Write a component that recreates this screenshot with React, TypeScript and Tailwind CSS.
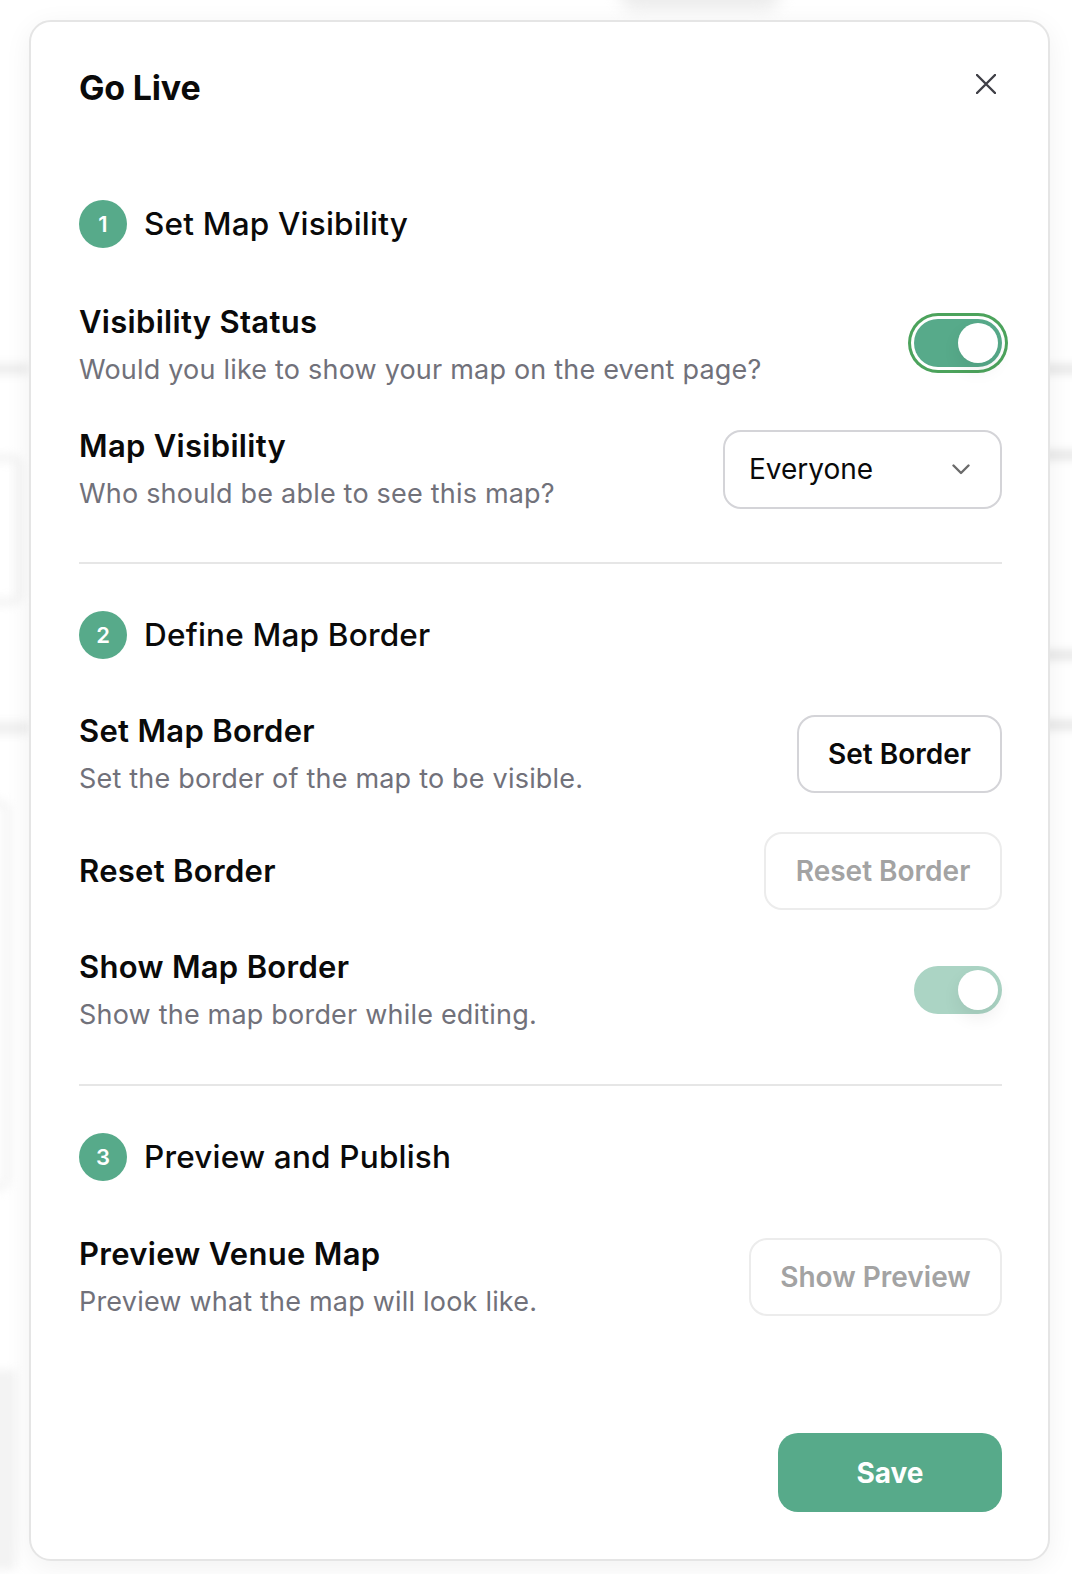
import React, { useState } from "react";

const GREEN = "bg-[#57aa8a]";

const StepHeader: React.FC<{ n: number; title: string; className?: string }> = ({ n, title, className }) => (
  <div className={`flex items-center gap-[17px] ${className || ""}`}>
    <div className={`flex h-[48px] w-[48px] items-center justify-center rounded-full ${GREEN} text-[22px] font-semibold text-white`}>
      {n}
    </div>
    <h3 className="text-[31.5px] font-medium leading-[40px] tracking-[0.2px] text-[#0a0a0a]">{title}</h3>
  </div>
);

const RowText: React.FC<{ label: string; desc?: string }> = ({ label, desc }) => (
  <div>
    <div className="text-[31px] font-semibold leading-[40px] tracking-[0.3px] text-[#0a0a0a]">{label}</div>
    {desc && <div className="mt-[10px] text-[27px] leading-[36px] tracking-[0.2px] text-[#71717a]">{desc}</div>}
  </div>
);

const Toggle: React.FC<{ on: boolean; disabled?: boolean; focused?: boolean; onChange?: (v: boolean) => void }> = ({
  on,
  disabled,
  focused,
  onChange,
}) => (
  <button
    type="button"
    onClick={() => !disabled && onChange && onChange(!on)}
    className={`relative flex h-[48px] w-[88px] items-center rounded-full p-[4px] ${
      disabled ? "bg-[#abd4c4]" : "bg-[#57aa8a]"
    } ${focused ? "ring-[3px] ring-[#4ca35c] ring-offset-[3px] ring-offset-white" : ""}`}
  >
    <span
      className={`block h-[40px] w-[40px] rounded-full bg-white shadow-[0_8px_18px_rgba(0,0,0,0.07)] ${
        on ? "ml-auto" : ""
      }`}
    />
  </button>
);

const OutlineBtn: React.FC<{ children: React.ReactNode; disabled?: boolean; className?: string }> = ({
  children,
  disabled,
  className,
}) => (
  <button
    type="button"
    disabled={disabled}
    className={`h-[78px] rounded-[18px] border-2 bg-white px-[28px] text-[28px] font-semibold ${
      disabled ? "border-[#ececec] text-[#a3a3a3]" : "border-[#d4d4d8] text-[#0a0a0a]"
    } ${className || ""}`}
  >
    {children}
  </button>
);

const Backdrop = () => (
  <div className="absolute inset-0 overflow-hidden">
    <div className="absolute left-[620px] top-[-20px] h-[30px] w-[160px] rounded-full bg-[#ececec] blur-[8px]" />
    <div className="absolute left-[-20px] top-[364px] h-[10px] w-[50px] bg-[#ececec] blur-[5px]" />
    <div className="absolute left-[-30px] top-[455px] h-[150px] w-[52px] rounded-[10px] border-[6px] border-[#f0f0f0] blur-[5px]" />
    <div className="absolute left-[-20px] top-[722px] h-[12px] w-[50px] bg-[#efefef] blur-[5px]" />
    <div className="absolute left-[-30px] top-[800px] h-[390px] w-[40px] rounded-[10px] border-[6px] border-[#f2f2f2] blur-[5px]" />
    <div className="absolute left-[-20px] top-[1370px] h-[200px] w-[36px] bg-[#f3f3f3] blur-[5px]" />
    <div className="absolute right-[-10px] top-[364px] h-[10px] w-[40px] bg-[#e8e8e8] blur-[4px]" />
    <div className="absolute right-[-10px] top-[450px] h-[10px] w-[40px] bg-[#e8e8e8] blur-[4px]" />
    <div className="absolute right-[-10px] top-[650px] h-[10px] w-[40px] bg-[#e8e8e8] blur-[4px]" />
    <div className="absolute right-[-10px] top-[720px] h-[10px] w-[40px] bg-[#e8e8e8] blur-[4px]" />
  </div>
);

export default function App() {
  const [visible, setVisible] = useState(true);
  const [showBorder, setShowBorder] = useState(true);

  return (
    <div className="relative min-h-[1574px] overflow-hidden bg-white font-['Inter','Noto_Sans',sans-serif] antialiased">
      <Backdrop />
      <div className="relative pl-[29px] pt-[20px]">
        <div className="flex w-[1021px] flex-col rounded-[22px] border-2 border-[#e5e5e5] bg-white pb-[47px] pl-[48px] pr-[46px] pt-[46px] shadow-[0_6px_28px_rgba(0,0,0,0.06)]">
          <div className="flex items-start justify-between">
            <h2 className="text-[34px] font-bold leading-[40px] tracking-[-0.2px] text-[#0a0a0a]">Go Live</h2>
            <button type="button" className="flex h-[32px] w-[32px] items-center justify-center text-[#3f3f46]">
              <svg width="20" height="20" viewBox="0 0 20 20" fill="none" stroke="currentColor" strokeWidth="2.4" strokeLinecap="round">
                <path d="M1 1l18 18M19 1L1 19" />
              </svg>
            </button>
          </div>

          <StepHeader n={1} title="Set Map Visibility" className="mt-[92px]" />

          <div className="mt-[54px] flex items-center justify-between">
            <RowText label="Visibility Status" desc="Would you like to show your map on the event page?" />
            <div className="-mt-[4px]">
              <Toggle on={visible} focused onChange={setVisible} />
            </div>
          </div>

          <div className="mt-[38px] flex items-center justify-between">
            <RowText label="Map Visibility" desc="Who should be able to see this map?" />
            <button
              type="button"
              className="flex h-[79px] w-[279px] items-center justify-between rounded-[18px] border-2 border-[#d4d4d8] bg-white pl-[24px] pr-[30px] text-[28px] text-[#0a0a0a]"
            >
              <span>Everyone</span>
              <svg width="18" height="11" viewBox="0 0 18 11" fill="none" stroke="#6b6b6b" strokeWidth="2.4" strokeLinecap="round" strokeLinejoin="round">
                <path d="M1.5 1.5l7.5 7.5 7.5-7.5" />
              </svg>
            </button>
          </div>

          <div className="mt-[50px] h-[2px] bg-[#e6e6e6]" />

          <StepHeader n={2} title="Define Map Border" className="mt-[47px]" />

          <div className="mt-[52px] flex items-center justify-between">
            <RowText label="Set Map Border" desc="Set the border of the map to be visible." />
            <OutlineBtn className="w-[205px]">Set Border</OutlineBtn>
          </div>

          <div className="mt-[35px] flex items-center justify-between">
            <RowText label="Reset Border" />
            <OutlineBtn disabled className="w-[238px]">
              Reset Border
            </OutlineBtn>
          </div>

          <div className="mt-[37px] flex items-center justify-between">
            <RowText label="Show Map Border" desc="Show the map border while editing." />
            <Toggle on={showBorder} disabled onChange={setShowBorder} />
          </div>

          <div className="mt-[51px] h-[2px] bg-[#e6e6e6]" />

          <StepHeader n={3} title="Preview and Publish" className="mt-[47px]" />

          <div className="mt-[53px] flex items-center justify-between">
            <RowText label="Preview Venue Map" desc="Preview what the map will look like." />
            <OutlineBtn disabled className="w-[253px]">
              Show Preview
            </OutlineBtn>
          </div>

          <button
            type="button"
            className={`mt-[113px] h-[79px] w-[224px] self-end rounded-[20px] ${GREEN} text-[28px] font-bold text-white`}
          >
            Save
          </button>
        </div>
      </div>
    </div>
  );
}
